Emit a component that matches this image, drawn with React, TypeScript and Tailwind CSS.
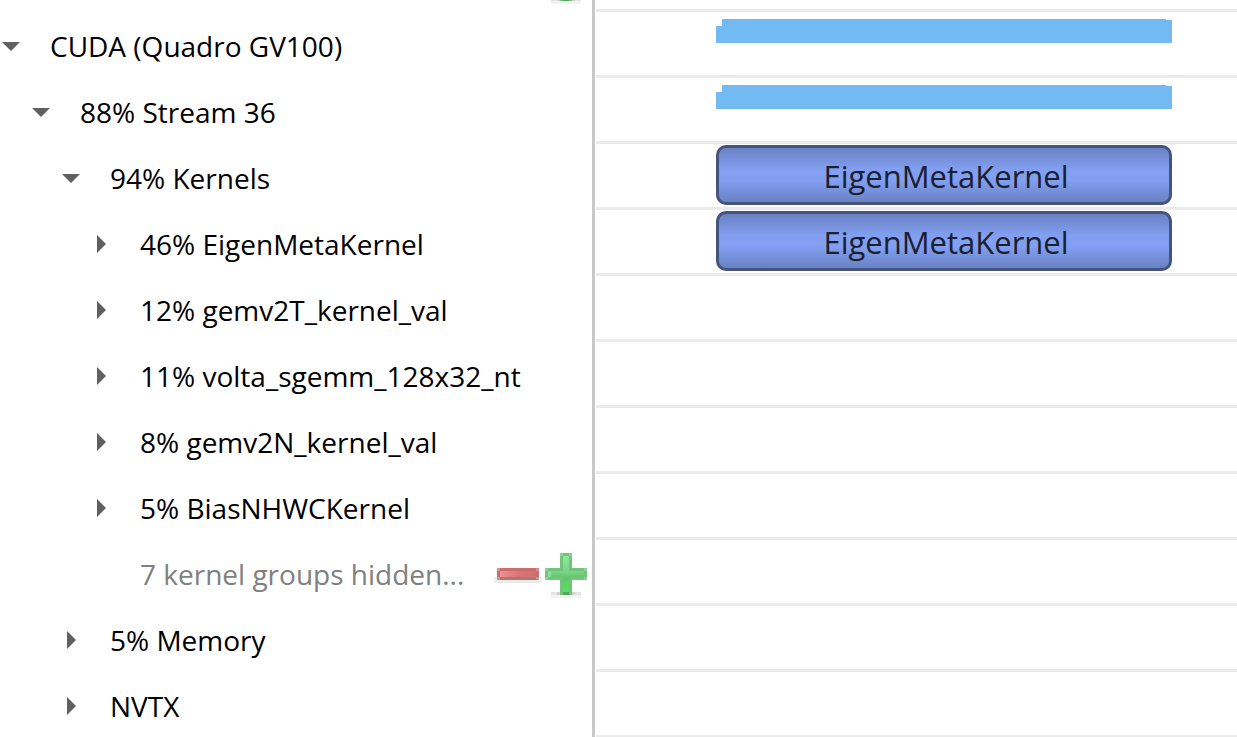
import { useState } from "react";

type Row = {
  id: string;
  label: string;
  level: number;
  parent?: string;
  expandable?: boolean;
  kind?: "usage" | "kernel";
  block?: string;
};

const rows: Row[] = [
  { id: "cuda", label: "CUDA (Quadro GV100)", level: 0, expandable: true, kind: "usage" },
  { id: "stream", label: "88% Stream 36", level: 1, parent: "cuda", expandable: true, kind: "usage" },
  { id: "kernels", label: "94% Kernels", level: 2, parent: "stream", expandable: true, kind: "kernel", block: "EigenMetaKernel" },
  { id: "eigen", label: "46% EigenMetaKernel", level: 3, parent: "kernels", expandable: true, kind: "kernel", block: "EigenMetaKernel" },
  { id: "gemv2t", label: "12% gemv2T_kernel_val", level: 3, parent: "kernels", expandable: true },
  { id: "volta", label: "11% volta_sgemm_128x32_nt", level: 3, parent: "kernels", expandable: true },
  { id: "gemv2n", label: "8% gemv2N_kernel_val", level: 3, parent: "kernels", expandable: true },
  { id: "bias", label: "5% BiasNHWCKernel", level: 3, parent: "kernels", expandable: true },
  { id: "hidden", label: "7 kernel groups hidden...", level: 3, parent: "kernels" },
  { id: "memory", label: "5% Memory", level: 2, parent: "stream", expandable: true },
  { id: "nvtx", label: "NVTX", level: 2, parent: "stream", expandable: true },
];

const indent = ["pl-0", "pl-[30px]", "pl-[60px]", "pl-[90px]"];

function MinusIcon() {
  return (
    <svg aria-hidden className="size-12" shapeRendering="crispEdges" viewBox="0 0 16 16">
      <defs>
        <linearGradient id="minus-fill" x1="0" x2="1" y1="0" y2="0">
          <stop offset="0" stopColor="#f09090" />
          <stop offset="0.5" stopColor="#d87676" />
          <stop offset="1" stopColor="#d07070" />
        </linearGradient>
      </defs>
      <path d="M0 9h16v2H0z" fill="#f0f0f0" />
      <path d="M1 10h14v1H1z" fill="#e9e9e9" />
      <path d="M1 9h14v1H1z" fill="#ad7575" />
      <path d="M1 6h14v3H1z" fill="#ce6c6c" />
      <path d="M2 7h12v2H2z" fill="url(#minus-fill)" />
      <path d="M1 6h1v1H1zM14 6h1v1h-1z" fill="#d49090" />
      <path d="M1 9h1v1H1zM14 9h1v1h-1z" fill="#bf9a9a" />
    </svg>
  );
}

function PlusIcon() {
  return (
    <svg aria-hidden className="size-12" shapeRendering="crispEdges" viewBox="0 0 16 16">
      <defs>
        <linearGradient id="plus-fill" x1="0" x2="0" y1="0" y2="1">
          <stop offset="0" stopColor="#8eea9b" />
          <stop offset="0.45" stopColor="#78d283" />
          <stop offset="0.6" stopColor="#64c46c" />
          <stop offset="1" stopColor="#55e462" />
        </linearGradient>
      </defs>
      <path d="M3 14h10v1H3z" fill="#e4e4e4" />
      <path d="M3 15h10v1H3z" fill="#f2f2f2" />
      <path d="M5 14h6v1H5z" fill="#d2d2d2" />
      <path d="M6 1h4v5h5v4h-5v5H6v-5H1V6h5z" fill="#70c57a" />
      <path d="M7 2h2v5h5v2H9v5H7V9H2V7h5z" fill="url(#plus-fill)" />
      <path d="M2 7h1v2H2z" fill="#8fe09a" />
      <path d="M7 14h2v1H7z" fill="#58a35f" />
      <path d="M6 1h1v1H6zM9 1h1v1H9zM1 6h1v1H1zM14 6h1v1h-1zM1 9h1v1H1zM14 9h1v1h-1z" fill="#8fd197" />
    </svg>
  );
}

function GroupButtons() {
  return (
    <div className="ml-auto flex pr-0.5">
      <button aria-label="Show fewer kernel groups" type="button">
        <MinusIcon />
      </button>
      <button aria-label="Show more kernel groups" type="button">
        <PlusIcon />
      </button>
    </div>
  );
}

function TreeRow({
  row,
  open,
  onToggle,
}: {
  row: Row;
  open: boolean;
  onToggle: () => void;
}) {
  return (
    <li className={`flex h-[66px] items-center gap-7 pt-0.5 ${indent[row.level]}`}>
      {row.expandable ? (
        <button
          aria-expanded={open}
          aria-label={`Toggle ${row.label}`}
          className="flex h-8 w-[22px] flex-none items-center justify-center"
          onClick={onToggle}
          type="button"
        >
          {open ? (
            <svg aria-hidden className="h-[9px] w-[18px]" viewBox="0 0 18 9">
              <path d="M0 0h18L9 9z" fill="#606060" />
            </svg>
          ) : (
            <svg aria-hidden className="h-[18px] w-[9px]" viewBox="0 0 9 18">
              <path d="M0 0v18l9-9z" fill="#606060" />
            </svg>
          )}
        </button>
      ) : (
        <span className="w-[22px] flex-none" />
      )}
      <span className={`whitespace-nowrap ${row.expandable ? "text-black" : "text-[#808080]"}`}>
        {row.label}
      </span>
      {row.id === "hidden" && <GroupButtons />}
    </li>
  );
}

function UsageBar() {
  return (
    <div className="flex items-end pt-[7px]">
      <div className="h-[17px] w-1.5 bg-[#74baf2]" />
      <div className="h-6 flex-1 bg-[#74baf2]" />
      <div className="h-[23px] w-1.5 bg-[#74baf2]" />
    </div>
  );
}

function KernelBlock({ name }: { name: string }) {
  return (
    <div className="pt-px">
      <div className="flex h-[60px] items-center justify-center rounded-[10px] border-3 border-[#44547f] bg-[linear-gradient(to_bottom,#6a82c3,#829ff1_40%,#829ff1_60%,#6a82c3)] pt-0.5 pl-1 text-[31px] text-[#1a2030]">
        {name}
      </div>
    </div>
  );
}

export default function App() {
  const [open, setOpen] = useState(["cuda", "stream", "kernels"]);

  function toggle(id: string) {
    setOpen((ids) => (ids.includes(id) ? ids.filter((item) => item !== id) : [...ids, id]));
  }

  function isVisible(row: Row): boolean {
    if (!row.parent) {
      return true;
    }
    const parent = rows.find((item) => item.id === row.parent);
    return open.includes(row.parent) && (!parent || isVisible(parent));
  }

  const visibleRows = rows.filter(isVisible);

  return (
    <main className="flex h-screen overflow-hidden bg-white font-['Open_Sans','Noto_Sans',sans-serif] text-[28px]">
      <section className="w-[595px] flex-none border-r-3 border-[#c8c8c8]">
        {/* tail of the row scrolled off the top */}
        <div className="flex h-3 items-end overflow-hidden">
          <div className="flex h-[66px] w-full items-center pt-0.5">
            <GroupButtons />
          </div>
        </div>
        <ul>
          {visibleRows.map((row) => (
            <TreeRow
              key={row.id}
              onToggle={() => toggle(row.id)}
              open={open.includes(row.id)}
              row={row}
            />
          ))}
        </ul>
      </section>

      <section className="ml-px min-w-0 flex-1">
        <div className="h-3 border-b-3 border-[#ebebeb]" />
        {visibleRows.map((row) => (
          <div className="h-[66px] border-b-3 border-[#ebebeb] pr-[65px] pl-[120px]" key={row.id}>
            {row.kind === "usage" && <UsageBar />}
            {row.block && <KernelBlock name={row.block} />}
          </div>
        ))}
      </section>
    </main>
  );
}
